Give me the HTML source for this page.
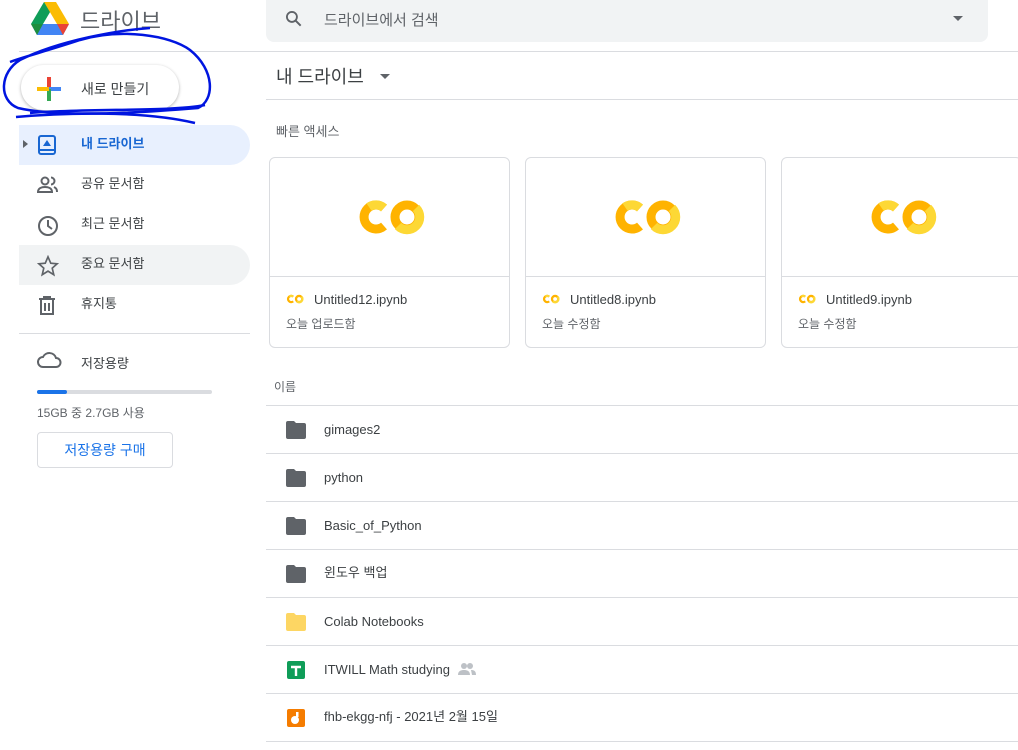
<!DOCTYPE html>
<html><head><meta charset="utf-8"><style>
*{margin:0;padding:0;box-sizing:border-box}
body{width:1018px;height:750px;overflow:hidden;background:#fff;font-family:"Liberation Sans","Noto Sans CJK KR",sans-serif;color:#3c4043;position:relative}
.a{position:absolute}
.nav{position:absolute;left:19px;width:231px;height:40px;border-radius:0 20px 20px 0;font-size:13px}
.nav span{position:absolute;left:62px;top:11px;line-height:16px}
.nav svg{position:absolute;left:18px;top:10px}
.card{position:absolute;top:157px;width:241px;height:191px;border:1px solid #dadce0;border-radius:6px;overflow:hidden}
.card .top{height:119px;border-bottom:1px solid #dadce0;position:relative}
.card .nm{position:absolute;left:44px;top:134px;font-size:13px;color:#3c4043}
.card .sb{position:absolute;left:16px;top:157px;font-size:12px;color:#5f6368}
.row{position:absolute;left:266px;width:752px;height:48px;border-bottom:1px solid #dadce0;font-size:13px;color:#3c4043}
.row span{position:absolute;left:58px;top:16px;line-height:16px}
.row svg{position:absolute;left:20px;top:15px}
</style></head><body>
<svg class="a" style="left:31px;top:2px" width="38" height="33" viewBox="0 0 38 33">
<polygon points="13,0 25,0 12,22 6,22 0,22" fill="#0f9d58"/>
<polygon points="13,0 25,0 38,22 26,22" fill="#fbbc04"/>
<polygon points="0,22 26,22 38,22 32,33 6,33" fill="#4285f4"/>
<polygon points="26,22 38,22 32,33" fill="#ea4335"/>
<polygon points="0,22 6,22 12,22 6,33" fill="#1e8e3e"/>
</svg>
<div class="a" style="left:80px;top:4px;font-size:22px;color:#5f6368">드라이브</div>
<div class="a" style="left:266px;top:0;width:722px;height:42px;background:#f1f3f4;border-radius:0 0 8px 8px"></div>
<svg class="a" style="left:284px;top:9px" width="20" height="20" viewBox="0 0 24 24"><circle cx="9.5" cy="9.5" r="6" stroke="#5f6368" stroke-width="2.2" fill="none"/><path d="M14 14l6 6" stroke="#5f6368" stroke-width="2.4"/></svg>
<div class="a" style="left:324px;top:9px;font-size:15px;color:#5f6368">드라이브에서 검색</div>
<div class="a" style="left:953px;top:16px;border:5px solid transparent;border-top-color:#5f6368"></div>
<div class="a" style="left:19px;top:51px;width:999px;height:1px;background:#dadce0"></div>
<div class="a" style="left:21px;top:65px;width:158px;height:45px;border-radius:23px;box-shadow:0 1px 3px rgba(0,0,0,.3);background:#fff"></div>
<svg class="a" style="left:37px;top:77px" width="24" height="24" viewBox="0 0 24 24"><rect x="10" y="0" width="4" height="12" fill="#ea4335"/><rect x="12" y="10" width="12" height="4" fill="#4285f4"/><rect x="10" y="12" width="4" height="12" fill="#34a853"/><rect x="0" y="10" width="12" height="4" fill="#fbbc04"/></svg>
<div class="a" style="left:81px;top:79px;font-size:14px;color:#3c4043">새로 만들기</div>
<svg class="a" style="left:0;top:0" width="230" height="130" viewBox="0 0 230 130"><g fill="none" stroke="#0015e0" stroke-width="2.5">
<path d="M150 28 C120 30,60 40,20 60 C0 72,-2 100,18 108 C60 118,150 112,198 108 C215 100,215 70,190 50 C170 35,120 28,80 40 C50 50,20 58,10 62"/>
<path d="M16 117 C60 113,140 110,195 123"/>
<path d="M30 113 C90 108,170 112,205 105"/>
</g></svg>
<div class="nav" style="top:125px;background:#e8f0fe;color:#1967d2;font-weight:bold">
<div class="a" style="left:4px;top:15px;border:4px solid transparent;border-left:5px solid #5f6368"></div>
<svg width="20" height="20" viewBox="0 0 20 20"><rect x="2" y="1" width="16" height="18" rx="2" fill="none" stroke="#1967d2" stroke-width="2"/><path d="M3 15h14" stroke="#1967d2" stroke-width="2"/><polygon points="10,5 14,11 6,11" fill="#1967d2"/></svg><span>내 드라이브</span></div>
<div class="nav" style="top:165px"><svg width="22" height="20" viewBox="0 0 22 20"><circle cx="8" cy="6" r="3.5" fill="none" stroke="#5f6368" stroke-width="2"/><path d="M1 17c0-4 4-5 7-5s7 1 7 5z" fill="none" stroke="#5f6368" stroke-width="2"/><path d="M14 2.5a3.5 3.5 0 010 7M17 12c2 1 3 2 3 5" fill="none" stroke="#5f6368" stroke-width="2"/></svg><span>공유 문서함</span></div>
<div class="nav" style="top:205px"><svg width="22" height="22" viewBox="0 0 22 22"><circle cx="11" cy="11" r="9" fill="none" stroke="#5f6368" stroke-width="2"/><path d="M11 5v6l4 3" fill="none" stroke="#5f6368" stroke-width="2"/></svg><span>최근 문서함</span></div>
<div class="nav" style="top:245px;background:#f1f3f4"><svg width="22" height="22" viewBox="0 0 24 24"><path d="M12 2l3 7 7 .6-5.4 4.7 1.7 7.2L12 17.6 5.7 21.5l1.7-7.2L2 9.6 9 9z" fill="none" stroke="#5f6368" stroke-width="1.8"/></svg><span>중요 문서함</span></div>
<div class="nav" style="top:285px"><svg width="20" height="20" viewBox="0 0 20 20"><path d="M2 4h16M7 4V2h6v2M4 4v15h12V4" fill="none" stroke="#5f6368" stroke-width="2"/><path d="M8 8v8M12 8v8" stroke="#5f6368" stroke-width="2"/></svg><span>휴지통</span></div>
<div class="a" style="left:19px;top:333px;width:231px;height:1px;background:#dadce0"></div>
<svg class="a" style="left:37px;top:351px" width="25" height="18" viewBox="0 0 25 18"><path d="M6 16a5 5 0 010-10 7 7 0 0113 1 4.5 4.5 0 010 9z" fill="none" stroke="#5f6368" stroke-width="2"/></svg>
<div class="a" style="left:81px;top:353px;font-size:13px">저장용량</div>
<div class="a" style="left:37px;top:390px;width:175px;height:4px;background:#dadce0;border-radius:2px"></div>
<div class="a" style="left:37px;top:390px;width:30px;height:4px;background:#1a73e8;border-radius:2px"></div>
<div class="a" style="left:37px;top:404px;font-size:12px;color:#5f6368">15GB 중 2.7GB 사용</div>
<div class="a" style="left:37px;top:432px;width:136px;height:36px;border:1px solid #dadce0;border-radius:4px;color:#1a73e8;font-size:14px;text-align:center;line-height:34px">저장용량 구매</div>
<div class="a" style="left:276px;top:63px;font-size:18px;color:#3c4043">내 드라이브</div>
<div class="a" style="left:380px;top:74px;border:5px solid transparent;border-top-color:#5f6368"></div>
<div class="a" style="left:266px;top:99px;width:752px;height:1px;background:#dadce0"></div>
<div class="a" style="left:276px;top:121px;font-size:13px;color:#5f6368">빠른 액세스</div>
<svg width="0" height="0" style="position:absolute"><defs><g id="co">
<path d="M-7 -9 A12 12 0 1 0 -7 9" fill="none" stroke="#ffb300" stroke-width="9"/>
<path d="M-7 -9 A12 12 0 0 0 -22 -10" fill="none" stroke="#fdd835" stroke-width="9"/>
<circle cx="16" cy="0" r="12" fill="none" stroke="#ffb300" stroke-width="9"/>
<path d="M7 9 A12 12 0 0 1 25 -9" fill="none" stroke="#fdd835" stroke-width="9" transform="rotate(180 16 0)"/>
</g></defs></svg>
<div class="card" style="left:269px"><div class="top"><svg class="a" style="left:86px;top:38px" width="70" height="42" viewBox="-35 -21 70 42"><use href="#co"/></svg></div><svg class="a" style="left:16px;top:135px" width="18" height="12" viewBox="-35 -21 70 42"><use href="#co"/></svg><div class="nm">Untitled12.ipynb</div><div class="sb">오늘 업로드함</div></div>
<div class="card" style="left:525px"><div class="top"><svg class="a" style="left:86px;top:38px" width="70" height="42" viewBox="-35 -21 70 42"><use href="#co"/></svg></div><svg class="a" style="left:16px;top:135px" width="18" height="12" viewBox="-35 -21 70 42"><use href="#co"/></svg><div class="nm">Untitled8.ipynb</div><div class="sb">오늘 수정함</div></div>
<div class="card" style="left:781px"><div class="top"><svg class="a" style="left:86px;top:38px" width="70" height="42" viewBox="-35 -21 70 42"><use href="#co"/></svg></div><svg class="a" style="left:16px;top:135px" width="18" height="12" viewBox="-35 -21 70 42"><use href="#co"/></svg><div class="nm">Untitled9.ipynb</div><div class="sb">오늘 수정함</div></div>
<div class="a" style="left:274px;top:378px;font-size:12px;color:#5f6368">이름</div>
<div class="a" style="left:266px;top:405px;width:752px;height:1px;background:#dadce0"></div>
<div class="row" style="top:406px"><svg width="20" height="18" viewBox="0 0 20 18"><path d="M0 2a2 2 0 012-2h6l2 2h8a2 2 0 012 2v12a2 2 0 01-2 2H2a2 2 0 01-2-2z" fill="#5f6368"/></svg><span>gimages2</span></div>
<div class="row" style="top:454px"><svg width="20" height="18" viewBox="0 0 20 18"><path d="M0 2a2 2 0 012-2h6l2 2h8a2 2 0 012 2v12a2 2 0 01-2 2H2a2 2 0 01-2-2z" fill="#5f6368"/></svg><span>python</span></div>
<div class="row" style="top:502px"><svg width="20" height="18" viewBox="0 0 20 18"><path d="M0 2a2 2 0 012-2h6l2 2h8a2 2 0 012 2v12a2 2 0 01-2 2H2a2 2 0 01-2-2z" fill="#5f6368"/></svg><span>Basic_of_Python</span></div>
<div class="row" style="top:550px"><svg width="20" height="18" viewBox="0 0 20 18"><path d="M0 2a2 2 0 012-2h6l2 2h8a2 2 0 012 2v12a2 2 0 01-2 2H2a2 2 0 01-2-2z" fill="#5f6368"/></svg><span style="top:15px">윈도우 백업</span></div>
<div class="row" style="top:598px"><svg width="20" height="18" viewBox="0 0 20 18"><path d="M0 2a2 2 0 012-2h6l2 2h8a2 2 0 012 2v12a2 2 0 01-2 2H2a2 2 0 01-2-2z" fill="#fdd663"/></svg><span>Colab Notebooks</span></div>
<div class="row" style="top:646px"><svg width="18" height="18" viewBox="0 0 18 18" style="left:21px"><rect width="18" height="18" rx="2" fill="#0f9d58"/><path d="M4 6h10M9 6v9" stroke="#fff" stroke-width="2.4"/></svg><span>ITWILL Math studying</span><svg style="left:192px;top:17px" width="18" height="12" viewBox="0 0 18 12"><circle cx="6" cy="3" r="3" fill="#bdc1c6"/><circle cx="12" cy="3" r="3" fill="#bdc1c6"/><path d="M0 12c0-4 3-5 6-5s6 1 6 5zM13 7c3 0 5 1 5 5h-4z" fill="#bdc1c6"/></svg></div>
<div class="row" style="top:694px"><svg width="18" height="18" viewBox="0 0 18 18" style="left:21px"><rect width="18" height="18" rx="2" fill="#f57c00"/><circle cx="8" cy="11" r="4" fill="#fff"/><rect x="9" y="3" width="2.5" height="5" fill="#fff"/></svg><span style="top:15px">fhb-ekgg-nfj - 2021년 2월 15일</span></div>
</body></html>
